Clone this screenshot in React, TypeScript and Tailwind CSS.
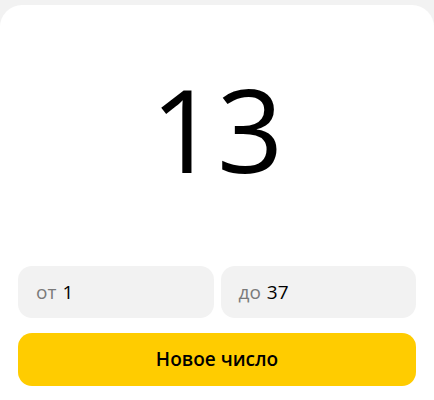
export default function App() {
  return (
    <div className="h-[400px] w-[434px] bg-[#f2f2f2] pt-[5px] font-['Open_Sans',sans-serif] overflow-hidden">
      <div className="h-[420px] rounded-t-[22px] bg-white px-[18px]">
        <div className="flex h-[261px] items-center justify-center pb-[16px]">
          <span className="text-[116px] leading-none text-black">13</span>
        </div>
        <div className="grid grid-cols-2 gap-[7px]">
          <div className="flex h-[52px] items-center rounded-[14px] bg-[#f2f2f2] px-[18px] text-[19px]">
            <span className="mr-[6px] text-[#7a7a7a]">от</span>
            <span className="text-black">1</span>
          </div>
          <div className="flex h-[52px] items-center rounded-[14px] bg-[#f2f2f2] px-[18px] text-[19px]">
            <span className="mr-[6px] text-[#7a7a7a]">до</span>
            <span className="text-black">37</span>
          </div>
        </div>
        <button className="mt-[15px] flex h-[53px] w-full items-center justify-center rounded-[14px] bg-[#ffcc00] text-[19px] font-semibold text-black">
          Новое число
        </button>
      </div>
    </div>
  );
}
